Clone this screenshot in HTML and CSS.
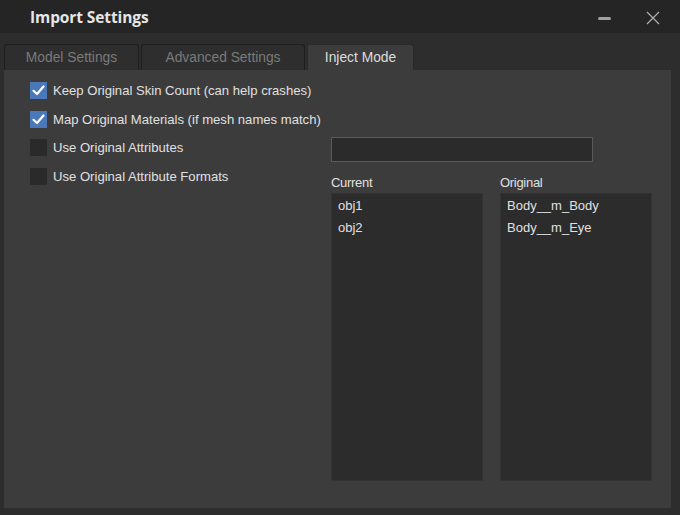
FILE: index.html
```html
<!DOCTYPE html>
<html>
<head>
<meta charset="utf-8">
<link rel="stylesheet" href="styles.css">
</head>
<body>
<div class="window">
  <div class="titlebar">
    <div class="title">Import Settings</div>
    <div class="controls">
      <span class="minimize"></span>
      <svg class="close" width="14" height="14" viewBox="0 0 14 14"><path d="M1 1 L13 13 M13 1 L1 13" stroke="#b0b0b0" stroke-width="1.2" fill="none"/></svg>
    </div>
  </div>
  <div class="tabs">
    <div class="tab t1">Model Settings</div>
    <div class="tab t2">Advanced Settings</div>
    <div class="tab t3 active">Inject Mode</div>
  </div>
  <div class="panel">
    <div class="options">
      <label class="opt"><span class="box checked"><svg width="17" height="17" viewBox="0 0 17 17"><path d="M3.5 8.8 L7 12 L13.5 4.5" stroke="#ffffff" stroke-width="2.2" fill="none" stroke-linecap="round" stroke-linejoin="round"/></svg></span>Keep Original Skin Count (can help crashes)</label>
      <label class="opt"><span class="box checked"><svg width="17" height="17" viewBox="0 0 17 17"><path d="M3.5 8.8 L7 12 L13.5 4.5" stroke="#ffffff" stroke-width="2.2" fill="none" stroke-linecap="round" stroke-linejoin="round"/></svg></span>Map Original Materials (if mesh names match)</label>
      <label class="opt"><span class="box"></span>Use Original Attributes</label>
      <label class="opt"><span class="box"></span>Use Original Attribute Formats</label>
    </div>
    <div class="mapping">
      <div class="search"></div>
      <div class="lists">
        <div class="col">
          <div class="label">Current</div>
          <div class="list">
            <div class="item">obj1</div>
            <div class="item">obj2</div>
          </div>
        </div>
        <div class="col">
          <div class="label">Original</div>
          <div class="list">
            <div class="item">Body__m_Body</div>
            <div class="item">Body__m_Eye</div>
          </div>
        </div>
      </div>
    </div>
  </div>
</div>
</body>
</html>
```

FILE: styles.css
```css
* { box-sizing: border-box; }
html, body {
  margin: 0;
  padding: 0;
  width: 680px;
  height: 515px;
  overflow: hidden;
  background: #2d2d2d;
  font-family: "Liberation Sans", Arial, sans-serif;
  font-size: 12px;
  color: #e2e2e2;
}
.window {
  width: 680px;
  height: 515px;
  display: flex;
  flex-direction: column;
}
.titlebar {
  height: 33px;
  background: #252525;
  display: flex;
  align-items: center;
  justify-content: space-between;
  padding-left: 30px;
  padding-right: 20px;
  padding-top: 2px;
  flex: none;
}
.title {
  font-family: "Open Sans", "Liberation Sans", sans-serif;
  font-weight: 700;
  font-size: 15.5px;
  color: #e6e6e6;
  letter-spacing: -0.1px;
  padding-bottom: 1px;
}
.controls {
  display: flex;
  align-items: center;
  gap: 35px;
}
.minimize {
  display: block;
  width: 13px;
  height: 3px;
  border-radius: 1.5px;
  background: #a0a0a0;
  margin-top: 1px;
}
.close { display: block; }
.tabs {
  display: flex;
  padding-left: 4px;
  margin-top: 11px;
  height: 26px;
  flex: none;
  gap: 2px;
}
.tab {
  height: 26px;
  border: 1px solid #1e1e1e;
  border-bottom: none;
  border-radius: 3px 3px 0 0;
  background: #2e2e2e;
  color: #7a7a7a;
  display: flex;
  align-items: center;
  justify-content: center;
  font-size: 13.8px;
  padding-bottom: 1px;
}
.t1 { width: 135px; }
.t2 { width: 164px; }
.t3 { width: 107px; }
.tab.active {
  background: #3c3c3c;
  color: #dcdcdc;
  border-color: #2a2a2a;
}
.panel {
  margin: 0 9px 7px 4px;
  height: 438px;
  background: #3c3c3c;
  display: flex;
  flex: none;
}
.options {
  width: 327px;
  padding: 12px 0 0 26px;
  display: flex;
  flex-direction: column;
  gap: 11.5px;
}
.opt {
  display: flex;
  align-items: center;
  height: 17px;
  font-size: 13.1px;
  color: #e0e0e0;
  white-space: nowrap;
}
.box {
  width: 17px;
  height: 17px;
  flex: none;
  background: #2a2a2a;
  margin-right: 6px;
  display: block;
}
.box.checked { background: #4a78b8; }
.box svg { display: block; }
.mapping {
  padding-top: 67px;
  display: flex;
  flex-direction: column;
}
.search {
  width: 262px;
  height: 25px;
  background: #2b2b2b;
  border: 1px solid #5a5a5a;
}
.lists {
  display: flex;
  gap: 17px;
  margin-top: 9px;
}
.col {
  display: flex;
  flex-direction: column;
}
.label {
  height: 22px;
  font-size: 13px;
  color: #e0e0e0;
  line-height: 23px;
  letter-spacing: -0.3px;
}
.list {
  width: 152px;
  height: 288px;
  background: #2c2c2c;
  border: 1px solid #333333;
  padding: 1px 0 0 6px;
}
.item {
  height: 21.5px;
  line-height: 21.5px;
  font-size: 13px;
  color: #e0e0e0;
}
```
